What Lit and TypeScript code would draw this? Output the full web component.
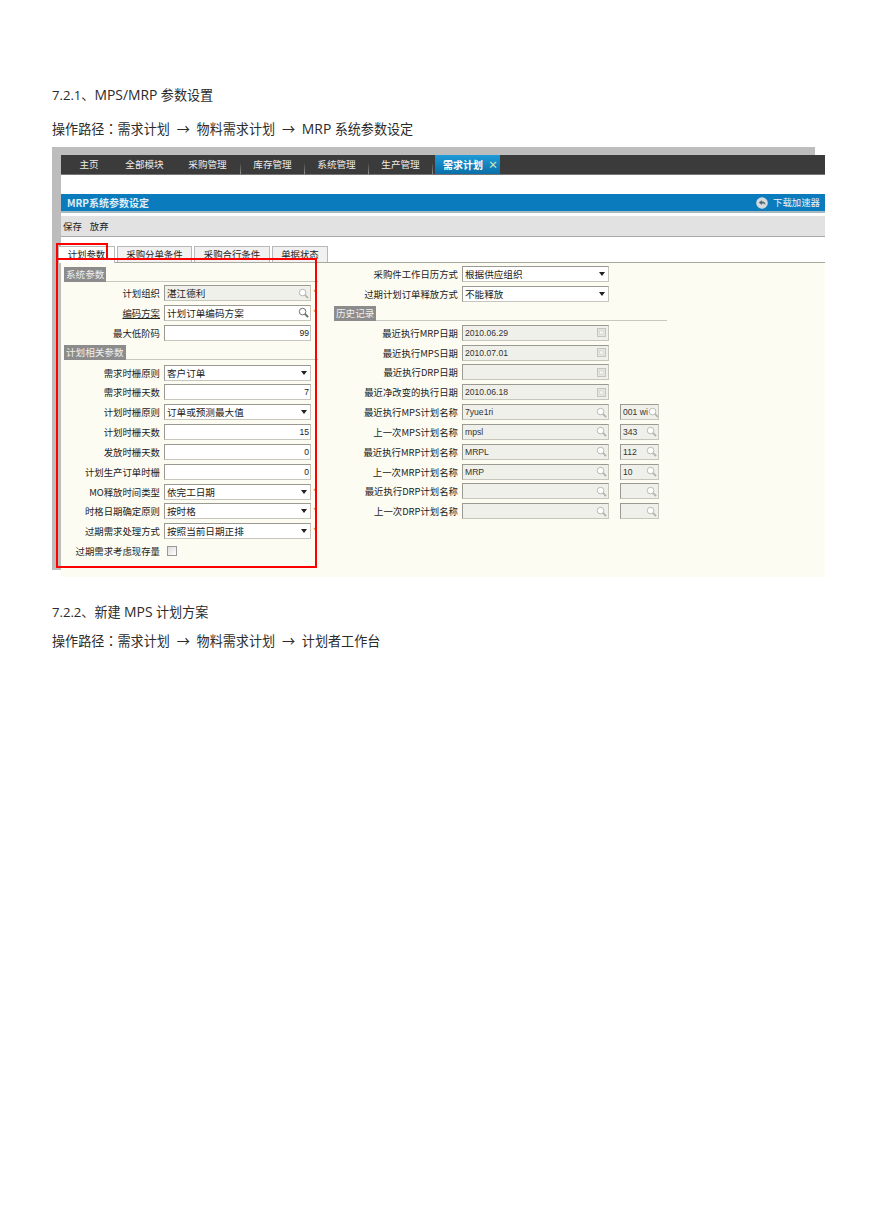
import { LitElement, html, css, svg } from "lit";
import { customElement } from "lit/decorators.js";

const lens = (c: string) => svg`<svg class="ico" width="11" height="11" viewBox="0 0 12 12"><circle cx="5" cy="5" r="3.6" fill="#fff" stroke="${c}" stroke-width="1"/><path d="M7.6 7.6L11 11" stroke="${c}" stroke-width="2"/></svg>`;
const cal = svg`<svg class="ico" width="11" height="11" viewBox="0 0 11 11"><rect x="1.5" y="1.5" width="8" height="8" fill="#e6e6e0" stroke="#c4c4c0"/><rect x="3.5" y="4" width="4" height="3" fill="#f6f6f2" stroke="#d0d0cc" stroke-width=".6"/></svg>`;
const caret = svg`<svg class="ico" width="6" height="4" viewBox="0 0 6 4"><path d="M0 0H6L3 4Z" fill="#222"/></svg>`;

type Kind = "ro" | "look" | "sel" | "num" | "date";
type Row = { l: string; v?: string; k: Kind; u?: boolean; star?: boolean; s?: string };

const leftA: Row[] = [
  { l: "计划组织", v: "湛江德利", k: "ro", star: true },
  { l: "编码方案", v: "计划订单编码方案", k: "look", u: true, star: true },
  { l: "最大低阶码", v: "99", k: "num" },
];
const leftB: Row[] = [
  { l: "需求时栅原则", v: "客户订单", k: "sel" },
  { l: "需求时栅天数", v: "7", k: "num" },
  { l: "计划时栅原则", v: "订单或预测最大值", k: "sel" },
  { l: "计划时栅天数", v: "15", k: "num" },
  { l: "发放时栅天数", v: "0", k: "num" },
  { l: "计划生产订单时栅", v: "0", k: "num" },
  { l: "MO释放时间类型", v: "依完工日期", k: "sel", star: true },
  { l: "时格日期确定原则", v: "按时格", k: "sel", star: true },
  { l: "过期需求处理方式", v: "按照当前日期正排", k: "sel", star: true },
];
const rightA: Row[] = [
  { l: "采购件工作日历方式", v: "根据供应组织", k: "sel" },
  { l: "过期计划订单释放方式", v: "不能释放", k: "sel" },
];
const rightB: Row[] = [
  { l: "最近执行MRP日期", v: "2010.06.29", k: "date" },
  { l: "最近执行MPS日期", v: "2010.07.01", k: "date" },
  { l: "最近执行DRP日期", v: "", k: "date" },
  { l: "最近净改变的执行日期", v: "2010.06.18", k: "date" },
  { l: "最近执行MPS计划名称", v: "7yue1ri", k: "ro", s: "001 wi" },
  { l: "上一次MPS计划名称", v: "mpsl", k: "ro", s: "343" },
  { l: "最近执行MRP计划名称", v: "MRPL", k: "ro", s: "112" },
  { l: "上一次MRP计划名称", v: "MRP", k: "ro", s: "10" },
  { l: "最近执行DRP计划名称", v: "", k: "ro", s: "" },
  { l: "上一次DRP计划名称", v: "", k: "ro", s: "" },
];

@customElement("app-root")
export class AppRoot extends LitElement {
  static styles = css`
    :host { display: block; height: 1228px; background: #fff; font-family: "Open Sans", "Noto Sans CJK SC", sans-serif; color: #2b2b2b; overflow: hidden; }
    .page { padding: 86px 0 0 52px; }
    .h { font-size: 13.1px; line-height: 18px; white-space: pre; }
    .h .cj { font-family: "Noto Sans CJK TC", sans-serif; }
    .h .en { font-size: 13.9px; }
    .h.b { margin-top: 16px; }
    .h.c { margin-top: 26px; }
    .h.d { margin-top: 11px; }
    .shot { margin-top: 9px; position: relative; width: 773px; height: 430px; }
    .frame { width: 763px; height: 423px; background: #bdbdbd; padding: 8px 0 0 9px; box-sizing: border-box; }
    .inner { width: 764px; height: 422px; background: #fff; font-family: "Noto Sans CJK SC", "Liberation Sans", sans-serif; font-size: 9.4px; color: #222; display: flex; flex-direction: column; }
    .nav { height: 20px; background: #3b3b3b; border-bottom: 1px solid #777; box-sizing: border-box; display: flex; color: #ececec; font-size: 9.6px; line-height: 19px; }
    .nav span { width: 64px; text-align: center; box-sizing: border-box; border-right: 1px solid #888; border-image: linear-gradient(#3b3b3b 40%, #999) 1; flex: none; }
    .nav span:first-child { width: 56px; border: 0; }
    .nav span:nth-child(2) { width: 55px; border: 0; }
    .nav span:nth-child(3) { width: 69px; padding-left: 3px; }
    .nav b { width: 65px; margin-left: 2px; background: linear-gradient(#1d9bd8, #0a6fa8); color: #fff; font-weight: 700; font-size: 10px; padding-left: 8px; box-sizing: border-box; display: flex; gap: 5px; }
    .nav i { font-style: normal; font-weight: 700; color: #cfe8b8; font-size: 10px; }
    .gap1 { height: 19px; }
    .blue { height: 17px; background: #0a7cbd; border-bottom: 2px solid #a9b9c2; color: #f2f2f2; display: flex; justify-content: space-between; align-items: center; padding: 0 5px 0 6px; line-height: 17px; }
    .blue .t { font-weight: 700; font-size: 10px; color: #dfeef8; }
    .blue .r { display: flex; gap: 5px; align-items: center; font-size: 9.4px; }
    .gap2 { height: 3px; }
    .tool { height: 20px; background: #e2e2e2; border-bottom: 1px solid #a8a8a8; display: flex; gap: 8px; align-items: center; padding-left: 2px; }
    .gap3 { height: 9px; }
    .tabs { height: 16px; display: flex; gap: 2px; align-items: flex-end; border-bottom: 1px solid #a8a8a0; }
    .tab { height: 16px; line-height: 14px; text-align: center; background: #f1f1f1; border: 1px solid #b8b8b8; border-bottom: 0; box-sizing: border-box; }
    .tab.on { background: #fff; margin-left: -3px; width: 57px; height: 17px; margin-bottom: -1px; }
    .tab.w2 { width: 75px; }
    .tab.w3 { width: 76px; }
    .tab.w4 { width: 56px; }
    .form { flex: 1; background: #fcfcf2; display: flex; }
    .col1 { width: 257px; padding: 4px 0 0 3px; box-sizing: border-box; flex: none; }
    .col2 { flex: 1; padding: 3px 0 0 16px; box-sizing: border-box; }
    .sec { height: 15px; box-sizing: border-box; border-bottom: 1px solid #c8c8c0; display: flex; margin-bottom: 4px; }
    .sec span { background: #8c8c8c; color: #f0f0f0; padding: 0 2px; line-height: 15px; height: 15px; font-size: 9.6px; }
    .col1 .sec { width: 254px; margin-bottom: 3px; }
    .col1 .sec.next { margin-bottom: 5px; }
    .col2 .sec { width: 333px; }
    .row { display: flex; height: 16px; margin-bottom: 3.85px; align-items: center; }
    .lab { text-align: right; white-space: nowrap; flex: none; margin-right: 4px; }
    .col1 .lab { width: 96px; }
    .col2 .lab { width: 124px; }
    .lab.u { text-decoration: underline; }
    .f { width: 147px; height: 16px; box-sizing: border-box; background: #fff; border: 1px solid #c6c6bc; border-top-color: #9a9a92; border-left-color: #9a9a92; display: flex; align-items: center; justify-content: space-between; padding: 0 1px 0 2px; line-height: 14px; flex: none; font-size: 9.6px; white-space: nowrap; overflow: hidden; }
    .f.ro { background: #f0f0ea; }
    .f.mini { width: 39px; margin-left: 11px; }
    .f.num { justify-content: flex-end; font-family: "Liberation Sans", sans-serif; font-size: 8.6px; }
    .lat { font-family: "Liberation Sans", sans-serif; font-size: 8.6px; color: #333; }
    .f .ico { flex: none; }
    .f .sel { margin-right: 2px; display: flex; }
    .star { color: #e8703c; font-size: 8px; margin-left: 2px; line-height: 10px; }
    .cb { width: 10px; height: 10px; box-sizing: border-box; margin-left: 3px; border: 1px solid #999; background: linear-gradient(135deg, #ddd, #fff); }
    .red1, .red2 { position: absolute; border: 2px solid #f00; box-sizing: border-box; pointer-events: none; }
    .red1 { left: 4px; top: 111px; width: 261px; height: 310px; }
    .red2 { left: 4px; top: 96px; width: 52px; height: 16px; border-bottom: 0; }
  `;

  private field(r: Row) {
    const lat = /^[\x20-\x7e]*$/.test(r.v ?? "");
    if (r.k === "num") return html`<div class="f num">${r.v}</div>`;
    if (r.k === "sel") return html`<div class="f"><span>${r.v}</span><span class="sel">${caret}</span></div>`;
    if (r.k === "date") return html`<div class="f ro"><span class="lat">${r.v}</span>${cal}</div>`;
    const c = r.k === "look" ? "#666" : "#b4b4ae";
    return html`<div class="f ${r.k === "ro" ? "ro" : ""}"><span class=${lat ? "lat" : ""}>${r.v}</span>${lens(c)}</div>`;
  }

  private row(r: Row) {
    return html`<div class="row">
      <span class="lab ${r.u ? "u" : ""}">${r.l}</span>${this.field(r)}
      ${r.star ? html`<span class="star">*</span>` : ""}
      ${r.s !== undefined ? html`<div class="f ro mini"><span class="lat">${r.s}</span>${lens("#b4b4ae")}</div>` : ""}
    </div>`;
  }

  render() {
    return html`<div class="page">
      <div class="h">7.2.1、<span class="en">MPS/MRP</span> 参数设置</div>
      <div class="h b">操作路径<span class="cj">：</span>需求计划  →  物料需求计划  →  <span class="en">MRP</span> 系统参数设定</div>
      <div class="shot">
        <div class="frame"><div class="inner">
          <div class="nav"><span>主页</span><span>全部模块</span><span>采购管理</span><span>库存管理</span><span>系统管理</span><span>生产管理</span><b>需求计划<i>×</i></b></div>
          <div class="gap1"></div>
          <div class="blue"><span class="t">MRP系统参数设定</span><span class="r"><svg width="12" height="12" viewBox="0 0 12 12"><circle cx="6" cy="6" r="5.8" fill="#d4dade"/><path d="M2.8 5.6L5.8 3.2V4.6C8 4.6 9.4 5.6 9.4 8C8.6 6.8 7.4 6.6 5.8 6.6V8Z" fill="#55666f"/></svg>下载加速器</span></div>
          <div class="gap2"></div>
          <div class="tool"><span>保存</span><span>放弃</span></div>
          <div class="gap3"></div>
          <div class="tabs"><div class="tab on">计划参数</div><div class="tab w2">采购分单条件</div><div class="tab w3">采购合行条件</div><div class="tab w4">单据状态</div></div>
          <div class="form">
            <div class="col1">
              <div class="sec"><span>系统参数</span></div>
              ${leftA.map((r) => this.row(r))}
              <div class="sec next"><span>计划相关参数</span></div>
              ${leftB.map((r) => this.row(r))}
              <div class="row"><span class="lab">过期需求考虑现存量</span><div class="cb"></div></div>
            </div>
            <div class="col2">
              ${rightA.map((r) => this.row(r))}
              <div class="sec"><span>历史记录</span></div>
              ${rightB.map((r) => this.row(r))}
            </div>
          </div>
        </div></div>
        <div class="red1"></div>
        <div class="red2"></div>
      </div>
      <div class="h c">7.2.2、新建 <span class="en">MPS</span> 计划方案</div>
      <div class="h d">操作路径<span class="cj">：</span>需求计划  →  物料需求计划  →  计划者工作台</div>
    </div>`;
  }
}
